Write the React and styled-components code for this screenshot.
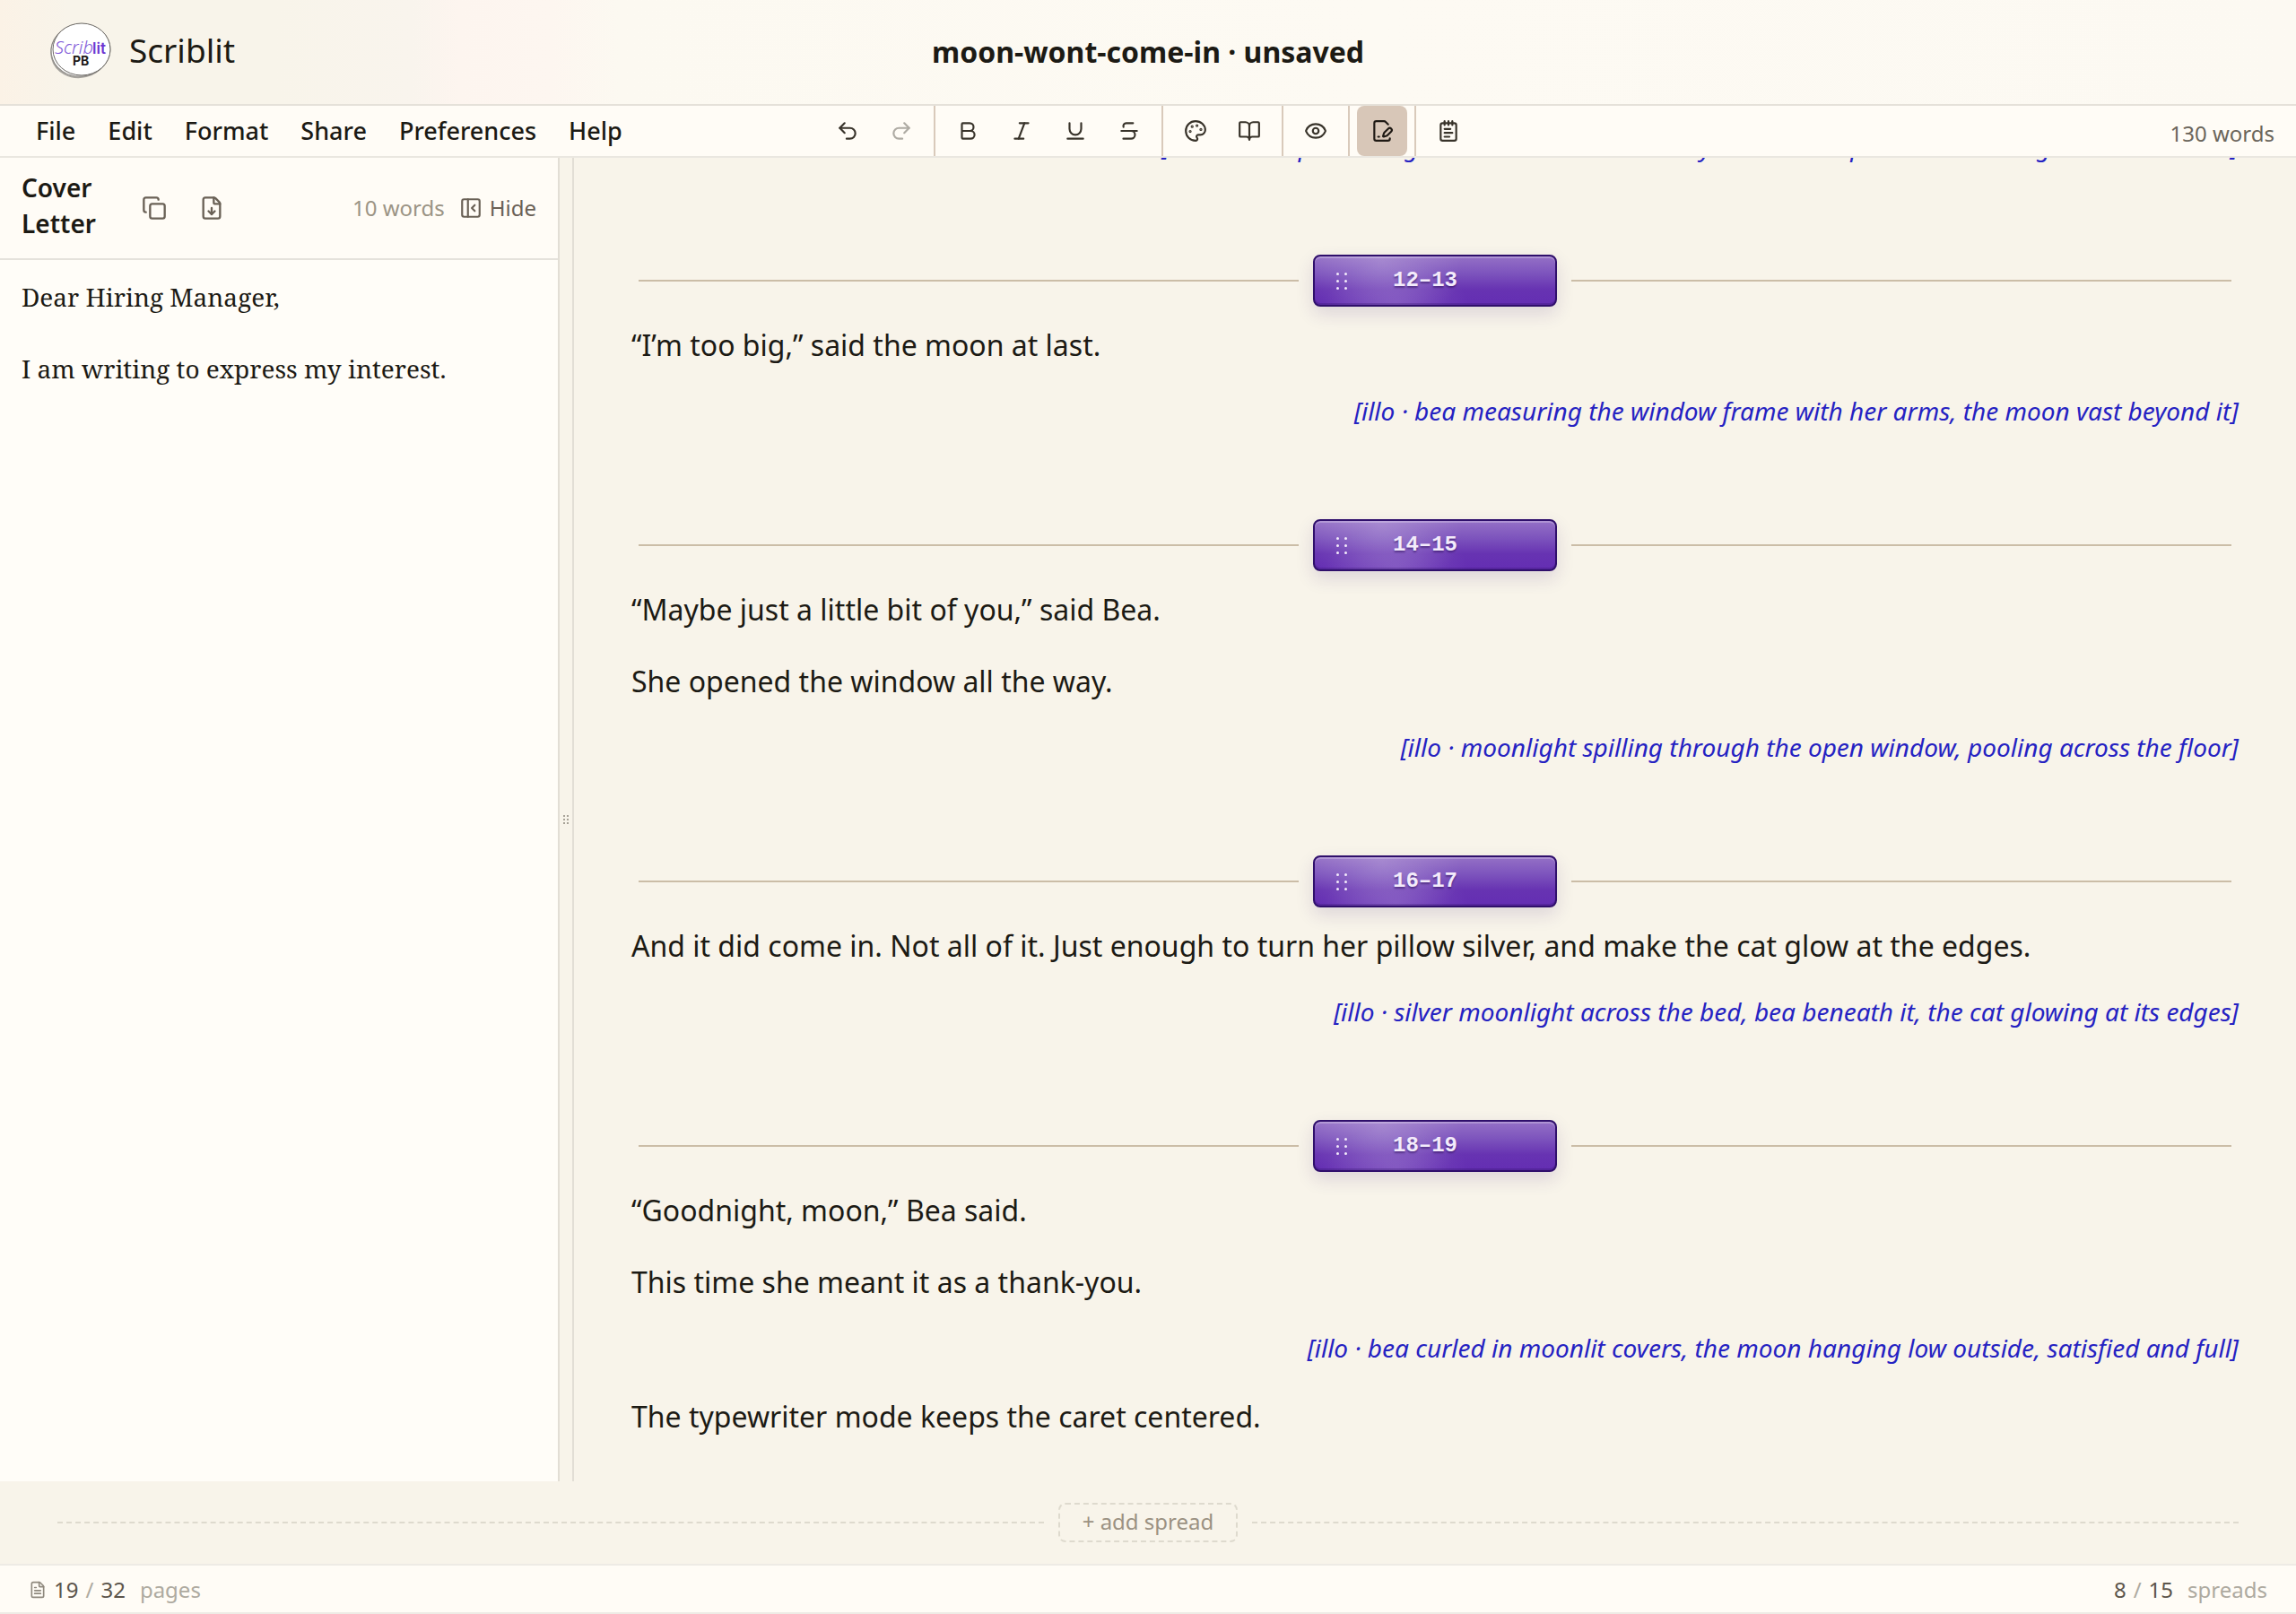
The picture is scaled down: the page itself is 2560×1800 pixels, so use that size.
import React from 'react';
import styled, { createGlobalStyle } from 'styled-components';
import {
    Undo2, Redo2, Bold, Italic, Underline, Strikethrough, Palette, BookOpen,
    Eye, FilePenLine, NotepadText, Copy, FileDown, PanelLeftClose, FileText,
} from 'lucide-react';

const MENUS = ['File', 'Edit', 'Format', 'Share', 'Preferences', 'Help'];

const TOOLS = [
    [
        { name: 'Undo', icon: Undo2 },
        { name: 'Redo', icon: Redo2, disabled: true },
    ],
    [
        { name: 'Bold', icon: Bold },
        { name: 'Italic', icon: Italic },
        { name: 'Underline', icon: Underline },
        { name: 'Strikethrough', icon: Strikethrough },
    ],
    [
        { name: 'Colors', icon: Palette },
        { name: 'Book view', icon: BookOpen },
    ],
    [{ name: 'Preview', icon: Eye }],
    [{ name: 'Cover letter', icon: FilePenLine, active: true }],
    [{ name: 'Notes', icon: NotepadText }],
];

const SPREADS = [
    {
        pages: '10–11',
        lines: [],
        illo: 'bea at peace · a great moon at the silver sky and the cat perched on a ledge beside the bed',
    },
    {
        pages: '12–13',
        lines: ['“I’m too big,” said the moon at last.'],
        illo: 'bea measuring the window frame with her arms, the moon vast beyond it',
    },
    {
        pages: '14–15',
        lines: ['“Maybe just a little bit of you,” said Bea.', 'She opened the window all the way.'],
        illo: 'moonlight spilling through the open window, pooling across the floor',
    },
    {
        pages: '16–17',
        lines: ['And it did come in. Not all of it. Just enough to turn her pillow silver, and make the cat glow at the edges.'],
        illo: 'silver moonlight across the bed, bea beneath it, the cat glowing at its edges',
    },
    {
        pages: '18–19',
        lines: ['“Goodnight, moon,” Bea said.', 'This time she meant it as a thank-you.'],
        illo: 'bea curled in moonlit covers, the moon hanging low outside, satisfied and full',
        after: 'The typewriter mode keeps the caret centered.',
    },
];

function Logo() {
    return (
        <LogoSvg viewBox="0 0 68 62" aria-hidden="true">
            <ellipse cx="33" cy="32" rx="32" ry="29" fill="#fff" stroke="#a5a29d" strokeWidth="2" transform="rotate(-14 33 32)" />
            <ellipse cx="34" cy="31" rx="33" ry="29" fill="#fff" stroke="#8b8883" strokeWidth="1" transform="rotate(-8 34 31)" />
            <ellipse cx="35" cy="30" rx="32" ry="29" fill="#fff" stroke="#6a6763" strokeWidth="1" />
            <text x="5" y="35" fontFamily="'Noto Sans', sans-serif" fontStyle="italic" fontWeight="300" fontSize="20" fill="#8058d8">
                Scrib
            </text>
            <text x="47" y="35" fontFamily="Inter, sans-serif" fontWeight="600" fontSize="17" fill="#6d35d2">lit</text>
            <text x="25" y="48" fontFamily="Inter, sans-serif" fontWeight="700" fontSize="14" fill="#1d1b1a">PB</text>
        </LogoSvg>
    );
}

function Grip({ dot, gap }) {
    return (
        <GripDots $dot={dot} $gap={gap} aria-hidden="true">
            <i /><i /><i /><i /><i /><i />
        </GripDots>
    );
}

function Spread({ pages, lines, illo, after }) {
    return (
        <section>
            <Divider>
                <Rule />
                <Pill type="button">
                    <Grip dot={3} gap={5} />
                    <span>{pages}</span>
                </Pill>
                <Rule />
            </Divider>
            {lines.map((line) => <Line key={line}>{line}</Line>)}
            <Illo>{`[illo · ${illo}]`}</Illo>
            {after && <Line>{after}</Line>}
        </section>
    );
}

function Count({ value, total }) {
    return (
        <Counter>
            <b>{value}</b>
            <span>/</span>
            <b>{total}</b>
        </Counter>
    );
}

export default function App() {
    return (
        <Page>
            <GlobalStyle />
            <Header>
                <Brand href="#">
                    <Logo />
                    Scriblit
                </Brand>
                <DocTitle>moon-wont-come-in · unsaved</DocTitle>
            </Header>
            <Bar>
                <Menu>
                    {MENUS.map((m) => <MenuButton type="button" key={m}>{m}</MenuButton>)}
                </Menu>
                <Tools>
                    {TOOLS.map((group) => (
                        <Group key={group[0].name}>
                            {group.map(({ name, icon: Icon, active, disabled }) => (
                                <Tool type="button" key={name} aria-label={name} $active={active} disabled={disabled}>
                                    <Icon size={26} />
                                </Tool>
                            ))}
                        </Group>
                    ))}
                </Tools>
                <WordTotal>130 words</WordTotal>
            </Bar>
            <Work>
                <Side>
                    <Panel>
                        <PanelHead>
                            <PanelTitle>Cover Letter</PanelTitle>
                            <PanelActions>
                                <IconButton type="button" aria-label="Copy"><Copy size={28} /></IconButton>
                                <IconButton type="button" aria-label="Download"><FileDown size={28} /></IconButton>
                            </PanelActions>
                            <PanelCount>10 words</PanelCount>
                            <HideButton type="button"><PanelLeftClose size={26} />Hide</HideButton>
                        </PanelHead>
                        <Letter>
                            <p>Dear Hiring Manager,</p>
                            <p>I am writing to express my interest.</p>
                        </Letter>
                    </Panel>
                    <Splitter><Grip dot={2} gap={2} /></Splitter>
                </Side>
                <Editor>
                    {SPREADS.map((s) => <Spread key={s.pages} {...s} />)}
                </Editor>
            </Work>
            <AddRow>
                <DashedRule />
                <AddButton type="button">+ add spread</AddButton>
                <DashedRule />
            </AddRow>
            <Footer>
                <Stat>
                    <FileText size={20} />
                    <Count value={19} total={32} />
                    <Unit>pages</Unit>
                </Stat>
                <Stat>
                    <Count value={8} total={15} />
                    <Unit>spreads</Unit>
                </Stat>
            </Footer>
        </Page>
    );
}

const GlobalStyle = createGlobalStyle`
    *, *::before, *::after {
        box-sizing: border-box;
    }
    body {
        margin: 0;
        background: #f8f4ea;
        color: #1c1a14;
        font-family: "Noto Sans", sans-serif;
        font-size: 24px;
    }
    button {
        font: inherit;
        color: inherit;
        background: none;
        border: 0;
        padding: 0;
    }
    p {
        margin: 0;
    }
`;
const Page = styled.div`
    display: flex;
    flex-direction: column;
    height: 100vh;
`;
const Header = styled.header`
    display: grid;
    grid-template-columns: 1fr auto 1fr;
    align-items: center;
    flex: none;
    height: 118px;
    padding: 0 56px;
    border-bottom: 2px solid #e5e1d9;
    background: linear-gradient(90deg, #fbf2e6 0, #f8f4ea 3%, #f8f4ea 12%, #f9f4ed 18%, #fdf5ef 20%, #fdf6f0 24%, #fcf9f1 27%, #fdfaf3 60%, #fcf9f2 100%);
`;
const Brand = styled.a`
    display: flex;
    align-items: center;
    gap: 20px;
    padding-bottom: 4px;
    color: inherit;
    font-size: 37px;
    line-height: 48px;
    text-decoration: none;
`;
const LogoSvg = styled.svg`
    width: 68px;
    height: 62px;
    overflow: visible;
`;
const DocTitle = styled.h1`
    margin: 0;
    font-size: 32px;
    font-weight: 700;
    line-height: 44px;
`;
const Bar = styled.div`
    display: grid;
    grid-template-columns: 1fr auto 1fr;
    align-items: center;
    flex: none;
    height: 58px;
    padding: 0 22px;
    border-bottom: 2px solid #eae7e0;
    background: #fffcf6;
`;
const Menu = styled.nav`
    display: flex;
`;
const MenuButton = styled.button`
    padding: 0 18px;
    font-size: 27px;
    font-weight: 500;
    line-height: 40px;
`;
const Tools = styled.div`
    display: flex;
`;
const Group = styled.div`
    display: flex;
    gap: 4px;
    padding: 0 8px;
    & + & {
        border-left: 2px solid #d9cabb;
    }
`;
const Tool = styled.button`
    display: flex;
    align-items: center;
    justify-content: center;
    width: 56px;
    height: 56px;
    border-radius: 8px;
    color: ${(p) => (p.$active ? '#1f1a14' : '#38332a')};
    background: ${(p) => (p.$active ? '#d8c7b8' : 'none')};
    &:disabled {
        opacity: 0.4;
    }
`;
const WordTotal = styled.span`
    justify-self: end;
    padding: 6px 2px 0 0;
    color: #6a655b;
    line-height: 32px;
`;
const Work = styled.main`
    display: grid;
    grid-template-columns: 25% 1fr;
    flex: 1;
    min-height: 0;
`;
const Side = styled.aside`
    display: flex;
    min-width: 0;
`;
const Panel = styled.div`
    flex: 1;
    background: #fffdf8;
`;
const PanelHead = styled.div`
    display: flex;
    align-items: center;
    height: 114px;
    padding: 0 24px;
    border-bottom: 2px solid #e5e2db;
    background: #fffcf6;
`;
const PanelTitle = styled.h2`
    width: min-content;
    margin: 0;
    padding-bottom: 6px;
    font-size: 28px;
    font-weight: 600;
    line-height: 40px;
`;
const PanelActions = styled.div`
    display: flex;
    gap: 8px;
    flex: 1;
    padding-left: 37px;
`;
const IconButton = styled.button`
    display: flex;
    align-items: center;
    justify-content: center;
    width: 56px;
    height: 56px;
    color: #6a6156;
`;
const PanelCount = styled.span`
    margin-right: 16px;
    color: #9b9485;
    line-height: 32px;
`;
const HideButton = styled.button`
    display: flex;
    align-items: center;
    gap: 8px;
    color: #6a6156;
    line-height: 32px;
`;
const Letter = styled.div`
    display: flex;
    flex-direction: column;
    gap: 40px;
    padding: 21px 24px;
    font-family: "Noto Serif", "Liberation Serif", serif;
    font-size: 28px;
    line-height: 40px;
`;
const Splitter = styled.div`
    display: flex;
    align-items: center;
    justify-content: center;
    width: 18px;
    border: 2px solid #e2ded5;
    border-width: 0 2px;
    color: #8d877b;
`;
const GripDots = styled.span`
    display: grid;
    grid-template-columns: auto auto;
    gap: ${(p) => p.$gap}px;
    i {
        width: ${(p) => p.$dot}px;
        height: ${(p) => p.$dot}px;
        border-radius: 50%;
        background: currentColor;
    }
`;
const Editor = styled.div`
    display: flex;
    flex-direction: column;
    justify-content: flex-end;
    min-width: 0;
    padding: 0 64px 18px;
    overflow: hidden;
`;
const Divider = styled.div`
    display: flex;
    align-items: center;
    gap: 16px;
    margin: 70px 8px 17px;
`;
const Rule = styled.hr`
    flex: 1;
    margin: 0;
    border: 0;
    border-top: 2px solid #cbbda7;
`;
const Pill = styled.button`
    display: grid;
    grid-template-columns: 12px 1fr;
    align-items: center;
    width: 272px;
    height: 58px;
    padding: 0 24px;
    border: 2px solid #2f0f6b;
    border-radius: 8px;
    background:
        radial-gradient(ellipse 90px 80px at 28% 10%, rgba(255, 255, 255, 0.2), transparent),
        radial-gradient(ellipse 80px 50px at 34% 100%, rgba(255, 255, 255, 0.14), transparent),
        linear-gradient(180deg, #9470c6 0%, #7d54bd 35%, #6733b2 68%, #642eb3 100%);
    box-shadow:
        inset 0 2px 0 rgba(255, 255, 255, 0.25),
        inset 0 -2px 0 rgba(40, 10, 90, 0.25),
        0 8px 20px rgba(60, 30, 110, 0.14);
    color: #f3ebfb;
    font-family: "Liberation Mono", monospace;
    font-size: 24px;
    font-weight: 700;
    line-height: 28px;
    text-shadow: 0 2px 2px rgba(30, 5, 70, 0.45);
    span:last-child {
        padding-right: 34px;
    }
`;
const Line = styled.p`
    margin-bottom: 28px;
    font-size: 32px;
    line-height: 52px;
`;
const Illo = styled.p`
    margin-bottom: 32px;
    color: #2522c2;
    font-size: 28px;
    font-style: italic;
    line-height: 38px;
    text-align: right;
`;
const AddRow = styled.div`
    display: flex;
    align-items: center;
    gap: 16px;
    flex: none;
    height: 92px;
    padding: 0 64px;
`;
const DashedRule = styled.hr`
    flex: 1;
    margin: 0;
    border: 0;
    border-top: 2px dashed #dedace;
`;
const AddButton = styled.button`
    width: 200px;
    height: 44px;
    padding-bottom: 2px;
    border: 2px dashed #dedace;
    border-radius: 8px;
    color: #9b9182;
    line-height: 32px;
`;
const Footer = styled.footer`
    display: flex;
    align-items: center;
    justify-content: space-between;
    flex: none;
    height: 56px;
    padding: 2px 32px 0;
    border: 2px solid #eeebe5;
    border-width: 2px 0;
    background: #fffcf6;
`;
const Stat = styled.div`
    display: flex;
    align-items: center;
    color: #aeaaa0;
    line-height: 32px;
    svg {
        margin-right: 8px;
        color: #8f897e;
    }
`;
const Counter = styled.span`
    display: flex;
    gap: 8px;
    b {
        color: #5c554b;
        font-weight: 400;
    }
`;
const Unit = styled.span`
    margin-left: 16px;
`;
